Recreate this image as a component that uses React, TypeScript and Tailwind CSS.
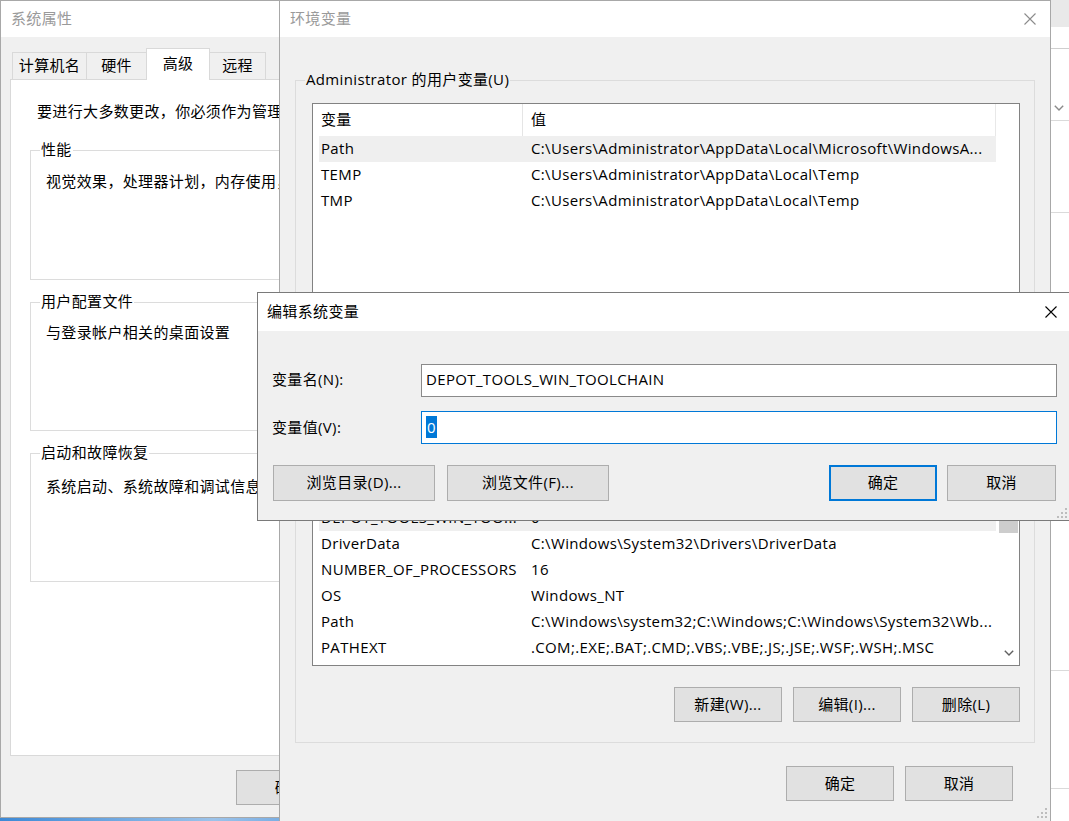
import React from "react";

const CloseX = ({ color }: { color: string }) => (
  <svg width="12" height="12" viewBox="0 0 12 12" className="shrink-0">
    <path d="M0.5 0.5L11.5 11.5M11.5 0.5L0.5 11.5" stroke={color} strokeWidth="1.1" />
  </svg>
);

const Grip = () => (
  <svg width="10" height="10" viewBox="0 0 10 10" fill="#bdbdbd">
    <rect x="8" y="0" width="2" height="2" />
    <rect x="4" y="4" width="2" height="2" />
    <rect x="8" y="4" width="2" height="2" />
    <rect x="0" y="8" width="2" height="2" />
    <rect x="4" y="8" width="2" height="2" />
    <rect x="8" y="8" width="2" height="2" />
  </svg>
);

const Chevron = ({ color }: { color: string }) => (
  <svg width="10" height="6" viewBox="0 0 10 6">
    <path d="M0.8 0.8L5 5L9.2 0.8" fill="none" stroke={color} strokeWidth="1.4" />
  </svg>
);

function Btn({ w, children, primary }: { w: string; children: React.ReactNode; primary?: boolean }) {
  return (
    <div
      className={`${w} h-full shrink-0 flex items-center justify-center pb-[2px] bg-[#e1e1e1] ${
        primary ? "border-2 border-[#0078d7]" : "border border-[#adadad]"
      }`}
    >
      {children}
    </div>
  );
}

function Row({ name, value, selected }: { name: string; value: string; selected?: boolean }) {
  return (
    <div className={`ml-[6px] w-[677px] h-[26px] shrink-0 flex items-center pb-[2px] whitespace-nowrap ${selected ? "bg-[#efefef]" : ""}`}>
      <div className="w-[212px] shrink-0 pl-[2px] overflow-hidden">{name}</div>
      <div className="flex-1 min-w-0 overflow-hidden">{value}</div>
    </div>
  );
}

function ListHeader() {
  return (
    <div className="h-[32px] w-[683px] shrink-0 flex items-stretch border-r border-[#e8e8e8]">
      <div className="w-[209px] shrink-0 pl-[8px] flex items-center pb-[2px]">变量</div>
      <div className="w-px bg-[#e5e5e5]" />
      <div className="flex-1 pl-[8px] flex items-center pb-[2px]">值</div>
    </div>
  );
}

export default function App() {
  return (
    <div className="relative w-[1069px] h-[821px] overflow-hidden bg-[linear-gradient(90deg,#3d89d6,#9cc3ea_20%,#4a91da_35%,#d4e4f4_55%,#4f95db_75%,#3d89d6)] font-['Open_Sans','Noto_Sans_CJK_SC',sans-serif] text-[15px] leading-[20px] tracking-[0.35px] text-black">
      {/* 系统属性 */}
      <div className="absolute left-0 top-0 w-[360px] h-[818px] flex flex-col bg-[#f0f0f0] border border-[#a8a8a8]">
        <div className="h-[36px] shrink-0 bg-white flex items-center pb-[2px] pl-[10px] text-[#9a9a9a]">系统属性</div>
        <div className="flex-1 flex flex-col pl-[9px] pt-[11px]">
          <div className="relative z-10 -mb-px h-[32px] flex items-end ml-[2px]">
            <div className="w-[75px] h-[28px] flex items-center justify-center pb-[2px] border border-[#d9d9d9] bg-[#f0f0f0]">计算机名</div>
            <div className="-ml-px w-[61px] h-[28px] flex items-center justify-center pb-[2px] border border-[#d9d9d9] bg-[#f0f0f0]">硬件</div>
            <div className="relative z-10 -ml-px w-[64px] h-[32px] flex items-start pt-[4px] justify-center border border-b-0 border-[#d9d9d9] bg-white">高级</div>
            <div className="-ml-px w-[57px] h-[28px] flex items-center justify-center pb-[2px] border border-[#d9d9d9] bg-[#f0f0f0]">远程</div>
          </div>
          <div className="h-[677px] shrink-0 bg-white border border-[#d9d9d9] pl-[19px] pt-[21px] flex flex-col whitespace-nowrap">
            <div className="pl-[7px]">要进行大多数更改，你必须作为管理员登录。</div>
            <div className="mt-[29px] w-[330px] h-[130px] border border-[#dcdcdc] flex flex-col">
              <div className="-mt-[12px] ml-[9px] px-[1px] w-fit bg-white">性能</div>
              <div className="mt-[12px] pl-[15px]">视觉效果，处理器计划，内存使用，以及虚拟内存</div>
            </div>
            <div className="mt-[22px] w-[330px] h-[129px] border border-[#dcdcdc] flex flex-col">
              <div className="-mt-[12px] ml-[9px] px-[1px] w-fit bg-white">用户配置文件</div>
              <div className="mt-[11px] pl-[15px]">与登录帐户相关的桌面设置</div>
            </div>
            <div className="mt-[22px] w-[330px] h-[129px] border border-[#dcdcdc] flex flex-col">
              <div className="-mt-[12px] ml-[9px] px-[1px] w-fit bg-white">启动和故障恢复</div>
              <div className="mt-[14px] pl-[15px]">系统启动、系统故障和调试信息</div>
            </div>
          </div>
          <div className="mt-[14px] h-[35px] flex gap-[11px] pl-[226px]">
            <Btn w="w-[108px]">确定</Btn>
            <Btn w="w-[108px]">取消</Btn>
          </div>
        </div>
      </div>

      {/* window behind on the right */}
      <div className="absolute left-[1050px] top-0 w-[30px] h-[821px] bg-white flex flex-col">
        <div className="h-[27px] shrink-0 bg-[#e9e9e9]" />
        <div className="h-[22px] shrink-0 border-b border-[#cfcfcf]" />
        <div className="h-[72px] shrink-0 border-b border-[#dadada] pl-[4px] pt-[56px]">
          <Chevron color="#8a8a8a" />
        </div>
        <div className="h-[92px] shrink-0 border-b border-[#dadada]" />
        <div className="h-[458px] shrink-0 border-b border-[#dadada]" />
        <div className="h-[118px] shrink-0 border-b border-[#dadada]" />
      </div>

      {/* 环境变量 */}
      <div className="absolute left-[279px] top-0 w-[772px] h-[823px] flex flex-col bg-[#f0f0f0] border border-[#a8a8a8]">
        <div className="h-[36px] shrink-0 bg-white flex items-center justify-between pl-[10px] pr-[14px] text-[#9a9a9a]">
          <span className="pb-[2px]">环境变量</span>
          <CloseX color="#8c8c8c" />
        </div>
        <div className="flex flex-col pl-[15px] pr-[15px]">
          <div className="mt-[43px] h-[306px] border border-[#dcdcdc] flex flex-col pl-[16px] pr-[14px]">
            <div className="-mt-[12px] -ml-[7px] px-[1px] w-fit bg-[#f0f0f0]">Administrator 的用户变量(U)</div>
            <div className="mt-[14px] h-[240px] bg-white border border-[#828282] flex flex-col overflow-hidden">
              <ListHeader />
              <Row name="Path" value="C:\Users\Administrator\AppData\Local\Microsoft\WindowsA..." selected />
              <Row name="TEMP" value="C:\Users\Administrator\AppData\Local\Temp" />
              <Row name="TMP" value="C:\Users\Administrator\AppData\Local\Temp" />
            </div>
          </div>
          <div className="mt-[11px] h-[346px] border border-[#dcdcdc] flex flex-col pl-[16px] pr-[14px]">
            <div className="-mt-[12px] -ml-[7px] px-[1px] w-fit bg-[#f0f0f0]">系统变量(S)</div>
            <div className="mt-[14px] h-[246px] bg-white border border-[#828282] flex overflow-hidden">
              <div className="flex-1 flex flex-col overflow-hidden">
                <ListHeader />
                <Row name="ComSpec" value="C:\Windows\system32\cmd.exe" />
                <Row name="configsetroot" value="C:\Windows\ConfigSetRoot" />
                <Row name="DEPOT_TOOLS_WIN_TOO..." value="0" selected />
                <Row name="DriverData" value="C:\Windows\System32\Drivers\DriverData" />
                <Row name="NUMBER_OF_PROCESSORS" value="16" />
                <Row name="OS" value="Windows_NT" />
                <Row name="Path" value="C:\Windows\system32;C:\Windows;C:\Windows\System32\Wb..." />
                <Row name="PATHEXT" value=".COM;.EXE;.BAT;.CMD;.VBS;.VBE;.JS;.JSE;.WSF;.WSH;.MSC" />
              </div>
              <div className="w-[21px] shrink-0 flex flex-col bg-white">
                <div className="h-[17px] shrink-0" />
                <div className="h-[33px] shrink-0" />
                <div className="h-[62px] shrink-0 mx-[1px] bg-[#cdcdcd]" />
                <div className="flex-1" />
                <div className="h-[22px] shrink-0 mb-[1px] flex items-center justify-center">
                  <Chevron color="#606060" />
                </div>
              </div>
            </div>
            <div className="mt-[21px] h-[35px] flex justify-end gap-[11px]">
              <Btn w="w-[108px]">新建(W)...</Btn>
              <Btn w="w-[108px]">编辑(I)...</Btn>
              <Btn w="w-[108px]">删除(L)</Btn>
            </div>
          </div>
          <div className="mt-[23px] h-[35px] flex justify-end gap-[11px] pr-[22px]">
            <Btn w="w-[108px]">确定</Btn>
            <Btn w="w-[108px]">取消</Btn>
          </div>
        </div>
        <div className="absolute right-[3px] bottom-[4px]">
          <Grip />
        </div>
      </div>

      {/* 编辑系统变量 */}
      <div className="absolute left-[257px] top-[292px] w-[813px] h-[229px] flex flex-col bg-[#f0f0f0] border border-[#7a7a7a]">
        <div className="h-[38px] shrink-0 bg-white flex items-center justify-between pl-[9px] pr-[12px]">
          <span className="pb-[2px]">编辑系统变量</span>
          <CloseX color="#000000" />
        </div>
        <div className="flex flex-col pl-[14px] pr-[12px] pt-[33px]">
          <div className="h-[33px] flex items-stretch">
            <div className="w-[149px] shrink-0 flex items-center pb-[3px]">变量名(N):</div>
            <div className="flex-1 bg-white border border-[#8a8a8a] flex items-center pb-[3px] pl-[4px]">DEPOT_TOOLS_WIN_TOOLCHAIN</div>
          </div>
          <div className="mt-[14px] h-[33px] flex items-stretch">
            <div className="w-[149px] shrink-0 flex items-center pb-[2px]">变量值(V):</div>
            <div className="flex-1 bg-white border border-[#0078d7] flex items-center pb-[2px] pl-[4px]">
              <span className="bg-[#0078d7] text-white leading-[22px] px-[1px]">0</span>
            </div>
          </div>
          <div className="mt-[21px] h-[36px] flex pl-[1px] pr-[1px]">
            <Btn w="w-[162px]">浏览目录(D)...</Btn>
            <div className="w-[12px] shrink-0" />
            <Btn w="w-[162px]">浏览文件(F)...</Btn>
            <div className="flex-1" />
            <Btn w="w-[108px]" primary>确定</Btn>
            <div className="w-[10px] shrink-0" />
            <Btn w="w-[109px]">取消</Btn>
          </div>
        </div>
        <div className="absolute right-[2px] bottom-[2px]">
          <Grip />
        </div>
      </div>
    </div>
  );
}
